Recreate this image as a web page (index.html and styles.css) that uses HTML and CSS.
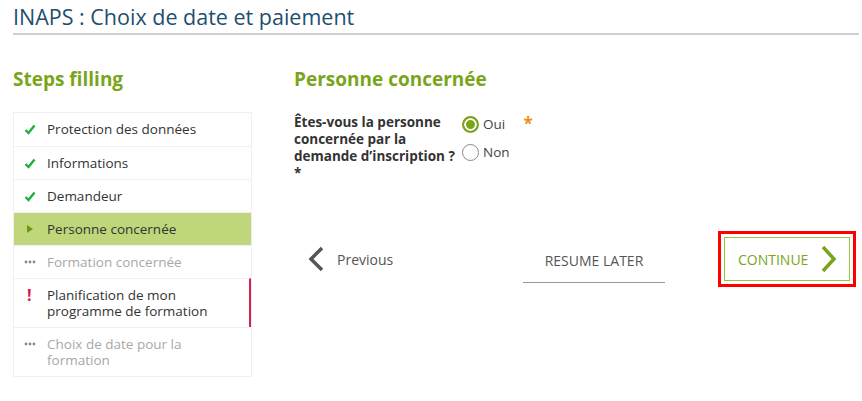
FILE: index.html
```html
<!DOCTYPE html>
<html>
<head lang="fr">
    <meta charset="UTF-8">
    <title>INAPS : Choix de date et paiement</title>
    <link rel="stylesheet" href="styles.css">
</head>
<body>
    <div class="page">
        <h1 class="title">INAPS : Choix de date et paiement</h1>

        <div class="layout">
            <div class="steps">
                <h2 class="steps-title">Steps filling</h2>
                <ul class="step-list">
                    <li class="step done"><span class="ico"><svg width="12" height="11" viewBox="0 0 12 11"><path d="M1.5 6 L4.5 9 L10.5 1.5" fill="none" stroke="#17b33b" stroke-width="2.4"/></svg></span>Protection des données</li>
                    <li class="step done"><span class="ico"><svg width="12" height="11" viewBox="0 0 12 11"><path d="M1.5 6 L4.5 9 L10.5 1.5" fill="none" stroke="#17b33b" stroke-width="2.4"/></svg></span>Informations</li>
                    <li class="step done"><span class="ico"><svg width="12" height="11" viewBox="0 0 12 11"><path d="M1.5 6 L4.5 9 L10.5 1.5" fill="none" stroke="#17b33b" stroke-width="2.4"/></svg></span>Demandeur</li>
                    <li class="step current"><span class="ico"><svg width="8" height="10" viewBox="0 0 8 10"><path d="M1 1 L7 5 L1 9 Z" fill="#6a9a10"/></svg></span>Personne concernée</li>
                    <li class="step todo"><span class="ico"><svg width="12" height="4" viewBox="0 0 12 4"><circle cx="2" cy="2" r="1.4" fill="#888"/><circle cx="6" cy="2" r="1.4" fill="#888"/><circle cx="10" cy="2" r="1.4" fill="#888"/></svg></span>Formation concernée</li>
                    <li class="step error"><span class="ico">!</span>Planification de mon programme de formation</li>
                    <li class="step todo"><span class="ico"><svg width="12" height="4" viewBox="0 0 12 4"><circle cx="2" cy="2" r="1.4" fill="#888"/><circle cx="6" cy="2" r="1.4" fill="#888"/><circle cx="10" cy="2" r="1.4" fill="#888"/></svg></span>Choix de date pour la formation</li>
                </ul>
            </div>

            <div class="main">
                <h2 class="main-title">Personne concernée</h2>
                <div class="field">
                    <label class="question">Êtes-vous la personne concernée par la demande d’inscription ? *</label>
                    <div class="options">
                        <label class="opt"><span class="radio checked"></span>Oui</label>
                        <label class="opt"><span class="radio"></span>Non</label>
                    </div>
                    <span class="req">*</span>
                </div>

                <div class="actions">
                    <a class="btn-prev" href="#">
                        <svg width="18" height="26" viewBox="0 0 18 26"><path d="M15 2 L4 13 L15 24" fill="none" stroke="#555" stroke-width="3.5"/></svg>
                        Previous
                    </a>
                    <a class="btn-later" href="#">RESUME LATER</a>
                    <div class="focus">
                        <a class="btn-next" href="#">
                            CONTINUE
                            <svg width="18" height="28" viewBox="0 0 18 28"><path d="M3 2 L14 14 L3 26" fill="none" stroke="#7aa51a" stroke-width="3.5"/></svg>
                        </a>
                    </div>
                </div>
            </div>
        </div>
    </div>
</body>
</html>
```

FILE: styles.css
```css
* {
    padding: 0;
    margin: 0;
    list-style: none;
    box-sizing: border-box;
}
body {
    font-family: "Open Sans", "DejaVu Sans", sans-serif;
    font-size: 13.5px;
    color: #333;
    background: #fff;
}
a {
    text-decoration: none;
}
.page {
    padding: 3px 3px 0 13px;
}
.title {
    font-size: 21.5px;
    font-weight: normal;
    color: #1f4e6e;
    line-height: 27px;
    padding-bottom: 3px;
    border-bottom: 2px solid #d0d0d0;
}
.layout {
    display: flex;
    gap: 42px;
    padding-top: 32px;
}
.steps {
    width: 239px;
}
.steps-title,
.main-title {
    font-size: 19px;
    font-weight: bold;
    color: #7aa51a;
    line-height: 24px;
    margin-bottom: 21px;
}
.step-list {
    border: 1px solid #eef0f6;
}
.step {
    display: flex;
    min-height: 33px;
    padding: 8px 10px 8px 10px;
    line-height: 16px;
    border-top: 1px solid #eef0f6;
}
.step:first-child {
    border-top: none;
}
.ico {
    width: 23px;
    flex: none;
    display: flex;
    align-items: center;
    height: 16px;
}
.current {
    background: #bfd77a;
}
.current .ico {
    padding-left: 2px;
}
.todo {
    color: #a8a8a8;
}
.error {
    padding-right: 30px;
    border-right: 2px solid #d8204a;
}
.error .ico {
    color: #d8204a;
    font-weight: bold;
    font-size: 16px;
    padding-left: 3px;
}
.main {
    flex: 1;
}
.field {
    display: flex;
    align-items: flex-start;
    margin-top: 3px;
}
.question {
    width: 168px;
    font-weight: bold;
    line-height: 17px;
    color: #333;
    padding-top: 2px;
}
.options {
    display: flex;
    flex-direction: column;
    gap: 7px;
    padding-top: 2px;
}
.opt {
    display: flex;
    align-items: center;
    gap: 4px;
    line-height: 21px;
    color: #444;
}
.radio {
    width: 17px;
    height: 17px;
    border: 1px solid #888;
    border-radius: 50%;
}
.radio.checked {
    border: 2px solid #7aa51a;
    box-shadow: inset 0 0 0 2px #fff;
    background: #7aa51a;
}
.req {
    color: #f08c1a;
    font-weight: bold;
    font-size: 17px;
    margin-left: 14px;
}
.actions {
    display: flex;
    align-items: center;
    margin-top: 49px;
}
.btn-prev {
    display: flex;
    align-items: center;
    gap: 12px;
    color: #555;
    font-size: 14px;
    width: 229px;
    padding-left: 13px;
}
.btn-later {
    color: #555;
    font-size: 14px;
    width: 142px;
    text-align: center;
    padding: 11px 0 12px;
    border-bottom: 1px solid #999;
    margin-top: 5px;
}
.focus {
    margin-left: 53px;
    border: 3px solid #f00;
    padding: 3px;
}
.btn-next {
    display: flex;
    align-items: center;
    gap: 12px;
    width: 126px;
    height: 44px;
    padding-left: 13px;
    border: 1px solid #9dc33c;
    color: #7aa51a;
    font-size: 14px;
}
```
